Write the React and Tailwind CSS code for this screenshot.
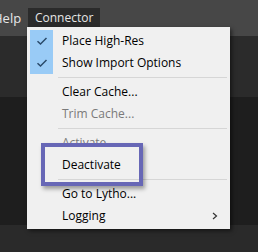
import React from "react";

const font = { fontFamily: '"Open Sans", "Noto Sans", sans-serif' };

function Check() {
  return (
    <svg width="12" height="10" viewBox="0 0 12 10" fill="none">
      <path d="M1.5 5.2 L4.5 8 L10.5 2" stroke="#2a4a6a" strokeWidth="1.5" />
    </svg>
  );
}

function Item({ label, checked, disabled, sub }) {
  return (
    <div className="flex h-[22px] items-center">
      <div
        className={
          "flex h-full w-[23px] items-center justify-center " +
          (checked ? "bg-[#99cbf6]" : "")
        }
      >
        {checked && <Check />}
      </div>
      <span
        className={
          "ml-[9px] text-[12px] " + (disabled ? "text-[#7a7a7a]" : "text-black")
        }
      >
        {label}
      </span>
      {sub && (
        <svg className="ml-auto mr-[12px]" width="6" height="8" viewBox="0 0 6 8">
          <path d="M1 1 L4.5 4 L1 7" stroke="#333" strokeWidth="1.2" fill="none" />
        </svg>
      )}
    </div>
  );
}

function Sep() {
  return (
    <div className="flex h-[7px] items-center pl-[28px] pr-[3px]">
      <div className="h-px w-full bg-[#d6d6d6]" />
    </div>
  );
}

export default function App() {
  return (
    <div className="relative h-[252px] w-[258px] overflow-hidden bg-[#1e1e1e]" style={font}>
      {/* ===== top bar ===== */}
      <div className="flex h-[36px] items-start bg-[#474747]">
        <span className="ml-[-7px] mt-[9px] text-[13px] text-[#e6e6e6]">Help</span>
        <div className="ml-[7px] mt-[8px] flex h-[19px] w-[72px] items-center justify-center bg-[#2b2b2b] text-[12px] text-[#e6e6e6]">
          Connector
        </div>
      </div>
      <div className="h-[61px] bg-[#2b2b2b]" />
      <div className="h-[128px]" />
      <div className="h-[27px] bg-[#2a2a2a]" />

      {/* ===== dropdown ===== */}
      <div className="absolute left-[27px] top-[27px] w-[203px] bg-[#f0f0f0] pb-[2px] pl-[3px] pt-[3px] shadow-[2px_2px_4px_rgba(0,0,0,0.5)]">
        <Item label="Place High-Res" checked />
        <Item label="Show Import Options" checked />
        <Sep />
        <Item label="Clear Cache..." />
        <Item label="Trim Cache..." disabled />
        <Sep />
        <Item label="Activate" disabled />
        <Item label="Deactivate" />
        <Sep />
        <Item label="Go to Lytho..." />
        <Item label="Logging" sub />
      </div>

      {/* ===== highlight box ===== */}
      <div className="absolute left-[41px] top-[143px] h-[43px] w-[102px] border-4 border-[#6767b6] shadow-[2px_3px_4px_rgba(0,0,0,0.35)]" />
    </div>
  );
}
